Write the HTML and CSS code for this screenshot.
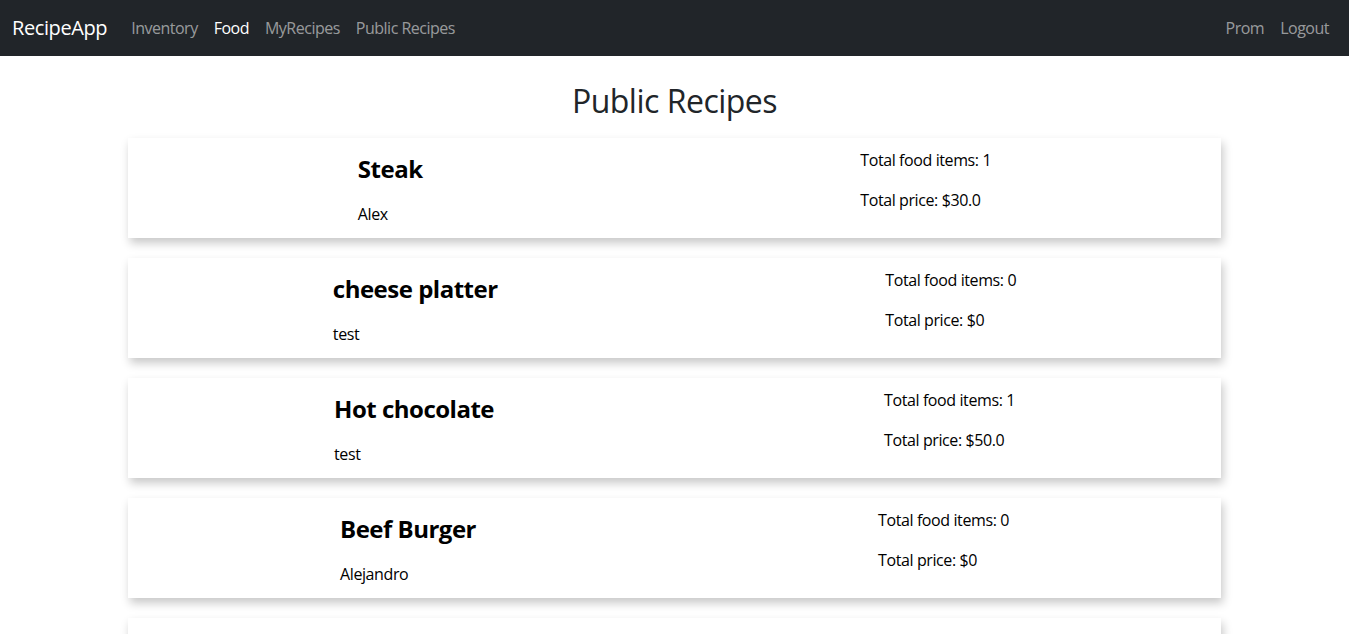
FILE: index.html
```html
<!DOCTYPE html>
<html lang="en">
<head>
<meta charset="utf-8">
<title>RecipeApp</title>
<link rel="stylesheet" href="styles.css">
</head>
<body>
<nav class="navbar">
  <div class="nav-left">
    <a class="brand" href="#">RecipeApp</a>
    <ul class="nav-links">
      <li><a class="nav-link" href="#">Inventory</a></li>
      <li><a class="nav-link active" href="#">Food</a></li>
      <li><a class="nav-link" href="#">MyRecipes</a></li>
      <li><a class="nav-link" href="#">Public Recipes</a></li>
    </ul>
  </div>
  <ul class="nav-links">
    <li><a class="nav-link" href="#">Prom</a></li>
    <li><a class="nav-link" href="#">Logout</a></li>
  </ul>
</nav>

<main class="page">
  <h2 class="page-title">Public Recipes</h2>
  <div class="recipe-list">
    <div class="recipe-card">
      <div class="recipe-name">
        <h4>Steak</h4>
        <p>Alex</p>
      </div>
      <div class="recipe-stats">
        <p>Total food items: 1</p>
        <p>Total price: $30.0</p>
      </div>
    </div>
    <div class="recipe-card">
      <div class="recipe-name">
        <h4>cheese platter</h4>
        <p>test</p>
      </div>
      <div class="recipe-stats">
        <p>Total food items: 0</p>
        <p>Total price: $0</p>
      </div>
    </div>
    <div class="recipe-card">
      <div class="recipe-name">
        <h4>Hot chocolate</h4>
        <p>test</p>
      </div>
      <div class="recipe-stats">
        <p>Total food items: 1</p>
        <p>Total price: $50.0</p>
      </div>
    </div>
    <div class="recipe-card">
      <div class="recipe-name">
        <h4>Beef Burger</h4>
        <p>Alejandro</p>
      </div>
      <div class="recipe-stats">
        <p>Total food items: 0</p>
        <p>Total price: $0</p>
      </div>
    </div>
    <div class="recipe-card"></div>
  </div>
</main>
</body>
</html>
```

FILE: styles.css
```css
* {
  box-sizing: border-box;
}

html, body {
  margin: 0;
  padding: 0;
}

body {
  font-family: "Open Sans", "Noto Sans", "Liberation Sans", sans-serif;
  font-size: 16px;
  line-height: 1.5;
  color: #212529;
  background: #fff;
  overflow: hidden;
}

a {
  text-decoration: none;
}

.navbar {
  height: 56px;
  background: #212529;
  display: flex;
  align-items: center;
  justify-content: space-between;
  padding: 0 12px;
}

.nav-left {
  display: flex;
  align-items: center;
}

.brand {
  font-size: 20px;
  color: #fff;
  margin-right: 16px;
  letter-spacing: -0.4px;
}

.nav-links {
  list-style: none;
  margin: 0;
  padding: 0;
  display: flex;
}

.nav-link {
  display: block;
  padding: 8px;
  color: rgba(255, 255, 255, 0.55);
  letter-spacing: -0.5px;
}

.nav-link.active {
  color: #fff;
}

.page {
  padding-top: 26px;
}

.page-title {
  margin: 0 0 18px;
  text-align: center;
  font-size: 32px;
  font-weight: 500;
  line-height: 1.2;
  letter-spacing: -0.5px;
}

.recipe-list {
  max-width: 1093px;
  margin: 0 auto;
}

.recipe-card {
  display: flex;
  justify-content: space-around;
  height: 100px;
  margin-bottom: 20px;
  padding: 10px 11px 8px;
  background: #fff;
  box-shadow: 2px 5px 9px rgba(0, 0, 0, 0.22);
  color: #000;
}

.recipe-name {
  padding-top: 7px;
}

.recipe-name h4 {
  margin: 0 0 18px;
  font-size: 24px;
  font-weight: 700;
  line-height: 1.2;
  letter-spacing: -0.5px;
}

.recipe-name p,
.recipe-stats p {
  margin: 0;
  letter-spacing: -0.4px;
}

.recipe-stats p + p {
  margin-top: 16px;
}
```
